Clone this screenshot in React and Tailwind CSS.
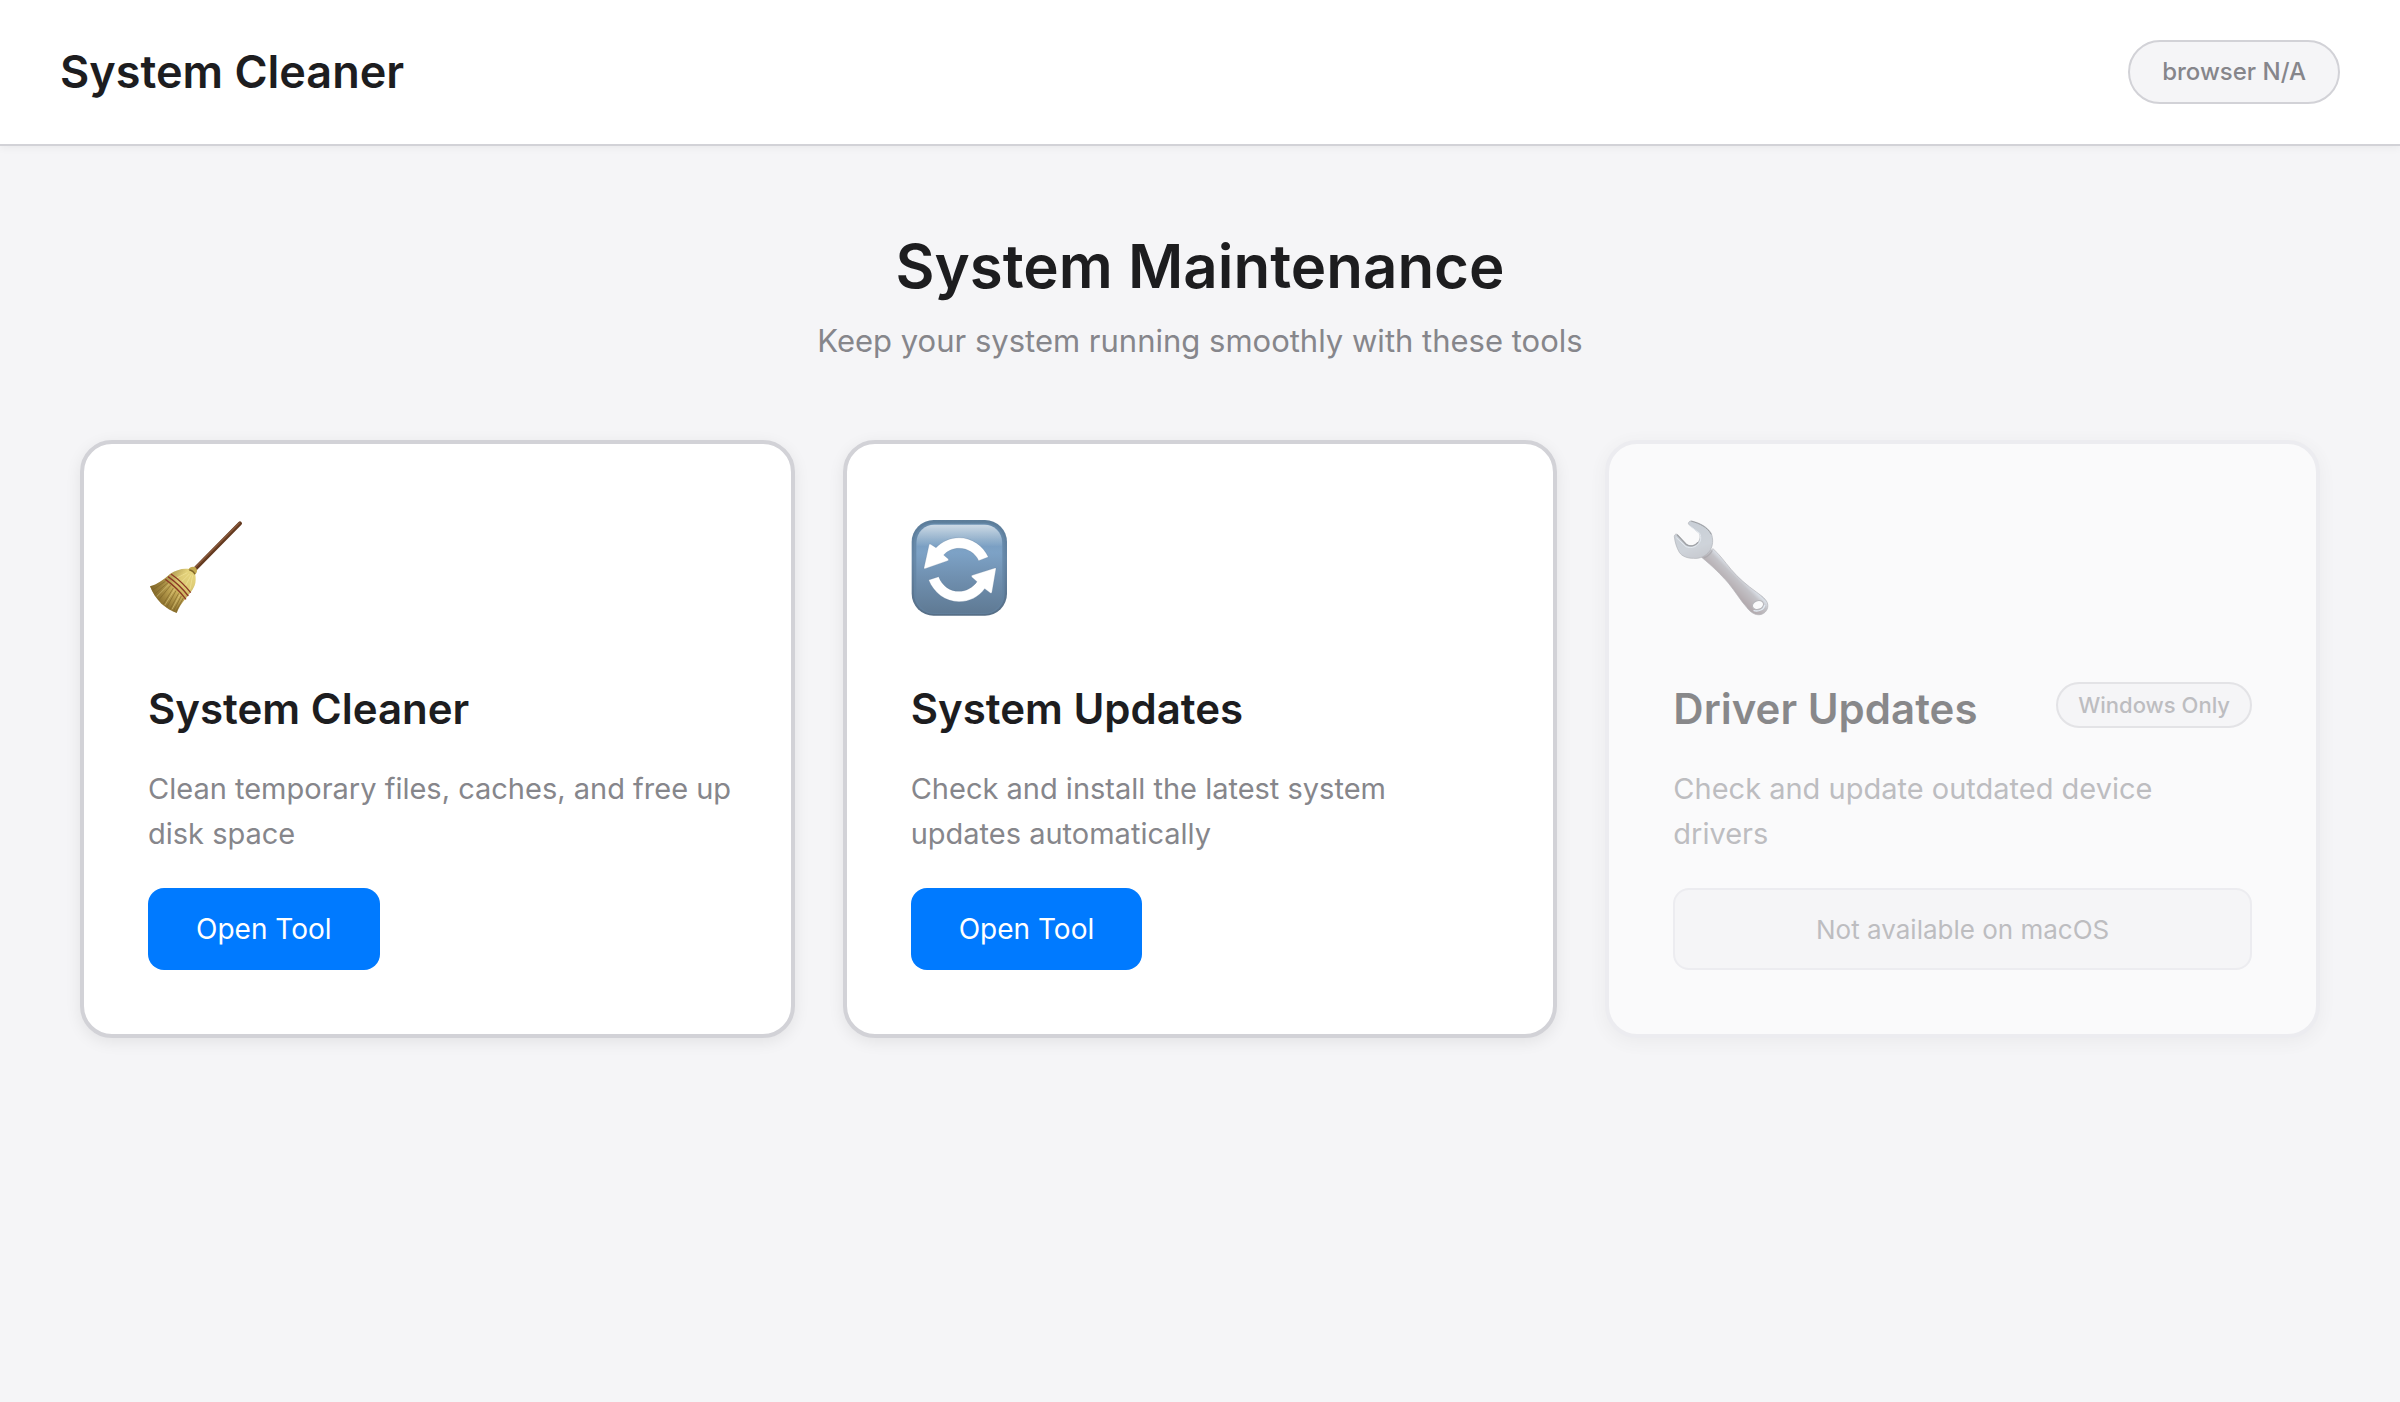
function BroomIcon() {
  return (
    <svg viewBox="0 0 288 288" className="size-24" aria-hidden="true">
      <defs>
        <linearGradient id="broom-straw" x1="130" y1="150" x2="45" y2="250" gradientUnits="userSpaceOnUse">
          <stop offset="0" stopColor="#e6d57d" />
          <stop offset="0.4" stopColor="#dcc974" />
          <stop offset="0.6" stopColor="#c9ae5a" />
          <stop offset="1" stopColor="#8f7430" />
        </linearGradient>
        <linearGradient id="broom-side" x1="30" y1="180" x2="120" y2="260" gradientUnits="userSpaceOnUse">
          <stop offset="0" stopColor="#6b521c" stopOpacity="0.55" />
          <stop offset="0.4" stopColor="#6b521c" stopOpacity="0" />
          <stop offset="0.75" stopColor="#6b521c" stopOpacity="0" />
          <stop offset="1" stopColor="#6b521c" stopOpacity="0.45" />
        </linearGradient>
      </defs>
      <path d="M276 10 144 144" stroke="#63391f" strokeWidth="12" strokeLinecap="round" />
      <path d="M274 9 142 142" stroke="#8a5a3c" strokeWidth="4" strokeLinecap="round" />
      <path
        d="M124 147C104 144 84 150 66 162 48 178 28 194 6 199c8 20 18 36 34 52 14 12 30 22 46 28 6-16 14-28 25-41 16-20 32-36 32-58 0-8 0-14-3-20Z"
        fill="url(#broom-straw)"
      />
      <path
        d="M124 147C104 144 84 150 66 162 48 178 28 194 6 199c8 20 18 36 34 52 14 12 30 22 46 28 6-16 14-28 25-41 16-20 32-36 32-58 0-8 0-14-3-20Z"
        fill="url(#broom-side)"
      />
      <path
        d="M60 188 20 222M68 196 32 240M76 204 46 252M84 212 56 262M92 220 66 268M100 228 76 274M52 184 14 210M106 234 84 274"
        stroke="#7a6024"
        strokeWidth="3"
        strokeOpacity="0.6"
      />
      <path
        d="M64 192 26 230M80 208 50 256M96 224 72 268"
        stroke="#ecdc92"
        strokeWidth="2"
        strokeOpacity="0.7"
      />
      <path
        d="M118 158 86 174M124 162 100 186M130 164 112 198M134 166 126 208"
        stroke="#f3e69c"
        strokeWidth="3"
        strokeOpacity="0.6"
      />
      <path
        d="M69 162c20 14 42 34 59 56M60 170c20 14 44 36 61 58M52 178c20 14 44 36 62 60"
        fill="none"
        stroke="#8c3a25"
        strokeWidth="4"
      />
      <path d="M121 149c2-6 8-9 14-9 8 0 13 6 12 13-1 5-3 9-7 11-4-7-11-13-19-15Z" fill="#c2a950" />
      <path d="M124 150c7 1 14 6 17 13" fill="none" stroke="#806629" strokeWidth="4" />
    </svg>
  );
}

function RefreshIcon() {
  return (
    <svg viewBox="0 0 288 288" className="size-24" aria-hidden="true">
      <defs>
        <linearGradient id="refresh-fill" x1="0" y1="0" x2="0" y2="1">
          <stop offset="0" stopColor="#7398b9" />
          <stop offset="0.32" stopColor="#7da2c6" />
          <stop offset="0.6" stopColor="#7090b0" />
          <stop offset="1" stopColor="#5f7a94" />
        </linearGradient>
        <linearGradient id="refresh-gloss" x1="0" y1="0" x2="0" y2="1">
          <stop offset="0" stopColor="#ffffff" stopOpacity="0.65" />
          <stop offset="1" stopColor="#ffffff" stopOpacity="0" />
        </linearGradient>
        <linearGradient id="refresh-edge" x1="0" y1="0" x2="0" y2="1">
          <stop offset="0" stopColor="#5c7d9a" />
          <stop offset="0.4" stopColor="#6585a5" />
          <stop offset="1" stopColor="#566e86" />
        </linearGradient>
      </defs>
      <rect x="2" y="0" width="286" height="287" rx="66" fill="url(#refresh-edge)" />
      <rect x="9" y="8" width="272" height="274" rx="60" fill="#6c90b2" fillOpacity="0.5" />
      <rect x="16" y="13" width="258" height="266" rx="54" fill="url(#refresh-fill)" />
      <path d="M17 80V66c0-30 24-52 53-52h150c29 0 53 22 53 52v14Z" fill="url(#refresh-gloss)" />
      <g fill="#ffffff" stroke="#53718d" strokeOpacity="0.45" strokeWidth="1.5" strokeLinejoin="round">
        <path d="M39 143 54 75q1-4 5-2l16 10C94 64 117 53 144 53c39 0 72 24 88 58l-29 11c-11-23-33-37-59-37-18 0-34 7-46 20l14 12q2 3-1 5L42 146q-4 1-3-3Z" />
        <path d="m255 146-12 70q-1 5-5 3l-17-13c-18 25-46 39-77 39-41 0-75-26-91-65l30-10c10 27 33 44 61 44 21 0 41-11 54-29l-16-14q-2-3 1-5l69-22q4-1 3 2Z" />
      </g>
    </svg>
  );
}

function WrenchIcon() {
  return (
    <svg viewBox="0 0 288 288" className="size-24" aria-hidden="true">
      <defs>
        <linearGradient id="wrench-metal" x1="60" y1="20" x2="90" y2="116" gradientUnits="userSpaceOnUse">
          <stop offset="0" stopColor="#9fabb8" />
          <stop offset="0.6" stopColor="#a9b3be" />
          <stop offset="1" stopColor="#9a9ea8" />
        </linearGradient>
        <linearGradient id="wrench-handle" x1="148" y1="182" x2="185" y2="145" gradientUnits="userSpaceOnUse">
          <stop offset="0" stopColor="#74656a" />
          <stop offset="0.35" stopColor="#857c83" />
          <stop offset="0.65" stopColor="#93929a" />
          <stop offset="0.9" stopColor="#c0cad6" />
          <stop offset="1" stopColor="#8c98a5" />
        </linearGradient>
      </defs>
      <path
        d="M86 112c34 28 56 50 80 77 20 24 36 52 55 73 12 16 26 24 40 22 16-2 26-18 23-32-3-14-18-24-34-36-28-20-54-42-76-68-20-24-34-44-54-62Z"
        fill="url(#wrench-handle)"
        stroke="#6f6e75"
        strokeWidth="2"
      />
      <path
        d="M47 13c-3-5 3-11 9-10 22 5 47 17 58 36 8 18 6 40-4 54-12 16-30 24-49 22-18 0-34-6-42-18C11 83 6 67 4 50c0-6 5-10 9-6l29 30c10 6 23 4 31-5 9-9 10-20 6-29Z"
        fill="url(#wrench-metal)"
        stroke="#6a7078"
        strokeWidth="2"
      />
      <path d="M56 4c24 6 48 18 58 38" fill="none" stroke="#4a4f56" strokeWidth="3" strokeLinecap="round" />
      <path d="M13 45 40 74c12 7 26 4 34-6" fill="none" stroke="#4a4f56" strokeWidth="4" strokeLinecap="round" />
      <path d="M50 17 80 40c6 13 3 26-6 34-10 9-22 11-35 6L10 53" fill="none" stroke="#d3dfea" strokeWidth="3" />
      <path d="M92 114c12-4 20-12 26-23" fill="none" stroke="#5d5a61" strokeWidth="4" strokeOpacity="0.7" />
      <ellipse cx="255" cy="255" rx="17" ry="13" transform="rotate(-20 255 255)" fill="#ffffff" stroke="#77777e" strokeWidth="3" />
      <path d="M275 256c-2 12-18 20-32 16" fill="none" stroke="#cfe0ee" strokeWidth="4" strokeLinecap="round" />
    </svg>
  );
}

function ToolCard({ icon, title, description, badge, disabled }) {
  return (
    <article
      className={
        disabled
          ? "flex flex-col rounded-[32px] border-4 border-[#e5e5ea] bg-white p-16 opacity-50 shadow-[0_4px_16px_rgba(0,0,0,0.08)]"
          : "flex flex-col rounded-[32px] border-4 border-[#d2d2d7] bg-white p-16 shadow-[0_4px_16px_rgba(0,0,0,0.08)]"
      }
    >
      <div className="pt-3 pb-[66px]">{icon}</div>
      <div className="mb-[30px] flex items-start justify-between gap-4">
        <h3 className="text-[42px] leading-[54px] font-semibold text-[#1d1d1f]">{title}</h3>
        {badge && (
          <span className="shrink-0 rounded-full border-2 border-[#d2d2d7] bg-[#f5f5f7] px-5 py-2 text-[22px] leading-[26px] font-medium text-[#86868b]">
            {badge}
          </span>
        )}
      </div>
      <p
        className={
          disabled
            ? "mb-8 pr-4 text-[29px] leading-[45px] text-[#86868b]"
            : "-mr-3 mb-8 text-[29px] leading-[45px] text-[#86868b]"
        }
      >
        {description}
      </p>
      {disabled ? (
        <button
          type="button"
          disabled
          className="h-[82px] w-full rounded-2xl border-2 border-[#e5e5ea] bg-[#f5f5f7] text-[26px] text-[#86868b]"
        >
          Not available on macOS
        </button>
      ) : (
        <button type="button" className="h-[82px] self-start rounded-2xl bg-[#007aff] px-12 text-[28px] text-white">
          Open Tool
        </button>
      )}
    </article>
  );
}

export default function App() {
  return (
    <div className="min-h-screen bg-[#f5f5f7] font-['Inter',sans-serif] text-[#1d1d1f]">
      <header className="flex items-center justify-between border-b-2 border-[#d2d2d7] bg-white px-15 py-10 shadow-[0_2px_8px_rgba(0,0,0,0.05)]">
        <h1 className="text-[45px] leading-[60px] font-semibold">System Cleaner</h1>
        <span className="rounded-full border-2 border-[#d2d2d7] bg-[#f5f5f7] px-8 py-4 text-2xl leading-7 font-medium text-[#86868b]">
          browser N/A
        </span>
      </header>
      <main className="px-20 pt-20">
        <div className="mb-20 text-center">
          <h2 className="mb-4 text-[60px] leading-[80px] font-semibold">System Maintenance</h2>
          <p className="text-[31px] leading-[38px] text-[#86868b]">Keep your system running smoothly with these tools</p>
        </div>
        <div className="grid grid-cols-3 gap-12">
          <ToolCard
            icon={<BroomIcon />}
            title="System Cleaner"
            description="Clean temporary files, caches, and free up disk space"
          />
          <ToolCard
            icon={<RefreshIcon />}
            title="System Updates"
            description="Check and install the latest system updates automatically"
          />
          <ToolCard
            icon={<WrenchIcon />}
            title="Driver Updates"
            description="Check and update outdated device drivers"
            badge="Windows Only"
            disabled
          />
        </div>
      </main>
    </div>
  );
}
